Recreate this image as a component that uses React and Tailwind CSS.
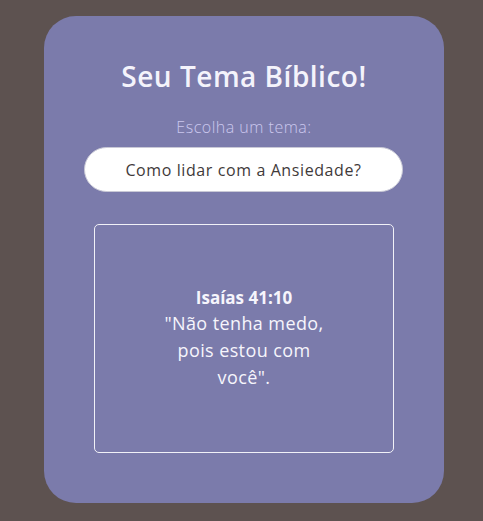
import React, { useState } from 'react'

function App() {
  const [tema, setTema] = useState("Como lidar com a Ansiedade?")

  return (
    <div className="min-h-screen bg-[#5d5250] pt-4 pb-4 font-['Open_Sans','Noto_Sans',sans-serif]">
      <div className="ml-[44px] w-[400px] h-[487px] rounded-[32px] bg-[#7b7bab] px-10 pt-10 flex flex-col">

        {/* Title */}
        <h1 className="text-center text-[28px] leading-[40px] font-semibold tracking-[0.5px] text-[#f4f3fb]">
          Seu Tema Bíblico!
        </h1>

        {/* Select label */}
        <p className="mt-5 text-center text-[16px] leading-[22px] font-light tracking-[0.5px] text-[#cbc8ee]">
          Escolha um tema:
        </p>

        {/* Tema input */}
        <input
          value={tema}
          onChange={(e) => setTema(e.target.value)}
          className="mt-[9px] h-[45px] w-[319px] rounded-full border border-[#c9c9d6] bg-white text-center text-[16px] tracking-[0.6px] text-[#3f3a3a] outline-none"
        />

        {/* Verse box */}
        <div className="mt-8 mx-[10px] h-[229px] rounded-[5px] border border-[#f1f1f7] flex flex-col items-center justify-center">
          <h3 className="text-[17px] leading-[24px] font-bold text-[#f6f5fc]">
            Isaías 41:10
          </h3>
          <p className="w-[168px] text-center text-[18px] leading-[27px] tracking-[0.4px] text-[#f6f5fc]">
            "Não tenha medo, pois estou com você".
          </p>
        </div>
      </div>
    </div>
  )
}

export default App
